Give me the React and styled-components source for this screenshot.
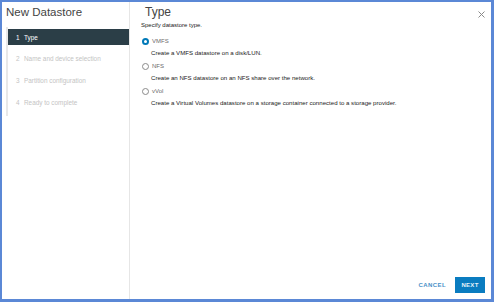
import React, { useState } from "react";
import styled, { createGlobalStyle } from "styled-components";

const GlobalStyle = createGlobalStyle`
  html, body {
    margin: 0;
    padding: 0;
    background: #ffffff;
  }
  body {
    font-family: "Liberation Sans", Arial, sans-serif;
  }
`;

const steps = [
  "Type",
  "Name and device selection",
  "Partition configuration",
  "Ready to complete",
];

const options = [
  { id: "vmfs", label: "VMFS", text: "Create a VMFS datastore on a disk/LUN." },
  { id: "nfs", label: "NFS", text: "Create an NFS datastore on an NFS share over the network." },
  {
    id: "vvol",
    label: "vVol",
    text: "Create a Virtual Volumes datastore on a storage container connected to a storage provider.",
  },
];

function App() {
  const [type, setType] = useState("vmfs");

  return (
    <>
      <GlobalStyle />
      <Frame>
        <Sidebar>
          <WizardTitle>New Datastore</WizardTitle>
          <StepList>
            {steps.map((s, i) => (
              <Step key={s} active={i === 0}>
                <StepNum>{i + 1}</StepNum>
                {s}
              </Step>
            ))}
          </StepList>
        </Sidebar>
        <Main>
          <Header>
            <PageTitle>Type</PageTitle>
            <Close aria-label="close">
              <svg width="7" height="7" viewBox="0 0 7 7">
                <path d="M0.5 0.5 L6.5 6.5 M6.5 0.5 L0.5 6.5" stroke="#8a8a8a" strokeWidth="1" />
              </svg>
            </Close>
          </Header>
          <Body>
            <Hint>Specify datastore type.</Hint>
            {options.map((o) => (
              <Option key={o.id} onClick={() => setType(o.id)}>
                <RadioRow>
                  <Radio checked={type === o.id} />
                  <RadioLabel>{o.label}</RadioLabel>
                </RadioRow>
                <Desc>{o.text}</Desc>
              </Option>
            ))}
          </Body>
          <Footer>
            <LinkButton>CANCEL</LinkButton>
            <PrimaryButton>NEXT</PrimaryButton>
          </Footer>
        </Main>
      </Frame>
    </>
  );
}

export default App;

const Frame = styled.div`
  box-sizing: border-box;
  width: 494px;
  height: 302px;
  border: 2px solid #5b88d6;
  border-right-width: 3px;
  border-bottom-width: 3px;
  display: flex;
  background: #fff;
`;

const Sidebar = styled.div`
  width: 127px;
  flex-shrink: 0;
  border-right: 1px solid #e6e6e6;
  padding-top: 3px;
`;

const WizardTitle = styled.div`
  font-size: 11.5px;
  font-weight: 300;
  color: #444;
  padding-left: 4px;
  height: 22px;
  line-height: 14px;
`;

const StepList = styled.div`
  margin-left: 4px;
  border-left: 2px solid #e8e8e8;
  padding: 2px 0 6px 0;
  display: flex;
  flex-direction: column;
  gap: 5.7px;
`;

const Step = styled.div`
  height: 16px;
  display: flex;
  align-items: center;
  padding-left: 8px;
  font-size: 6.4px;
  background: ${(p) => (p.active ? "#2b3e47" : "transparent")};
  color: ${(p) => (p.active ? "#ffffff" : "#c4c4c4")};
`;

const StepNum = styled.span`
  width: 8px;
`;

const Main = styled.div`
  flex: 1;
  display: flex;
  flex-direction: column;
  padding-left: 11px;
`;

const Header = styled.div`
  display: flex;
  justify-content: space-between;
  align-items: flex-start;
  height: 20px;
`;

const PageTitle = styled.div`
  font-size: 12px;
  font-weight: 300;
  color: #444;
  padding: 3px 0 0 4px;
  line-height: 14px;
`;

const Close = styled.div`
  margin: 9px 6px 0 0;
  width: 7px;
  height: 7px;
  display: flex;
`;

const Body = styled.div`
  flex: 1;
  display: flex;
  flex-direction: column;
  gap: 7px;
`;

const Hint = styled.div`
  font-size: 6px;
  color: #222;
  margin-bottom: 2.5px;
`;

const Option = styled.div`
  display: flex;
  flex-direction: column;
  gap: 4px;
  cursor: pointer;
`;

const RadioRow = styled.div`
  display: flex;
  align-items: center;
  gap: 3px;
  margin-left: 1px;
`;

const Radio = styled.span`
  box-sizing: border-box;
  width: 7px;
  height: 7px;
  border-radius: 50%;
  border: ${(p) => (p.checked ? "2px solid #0079b8" : "1px solid #8a8a8a")};
  background: #fff;
`;

const RadioLabel = styled.span`
  font-size: 6px;
  color: #6a6a6a;
`;

const Desc = styled.div`
  font-size: 6.1px;
  color: #222;
  padding-left: 10px;
`;

const Footer = styled.div`
  display: flex;
  justify-content: flex-end;
  align-items: center;
  gap: 9px;
  padding: 0 6px 6px 0;
`;

const LinkButton = styled.div`
  font-size: 6px;
  font-weight: 700;
  letter-spacing: 0.4px;
  color: #4a90c8;
`;

const PrimaryButton = styled.div`
  width: 30px;
  height: 16px;
  display: flex;
  align-items: center;
  justify-content: center;
  background: #0a7cc0;
  color: #e8f3fa;
  font-size: 6px;
  font-weight: 700;
  letter-spacing: 0.3px;
`;
